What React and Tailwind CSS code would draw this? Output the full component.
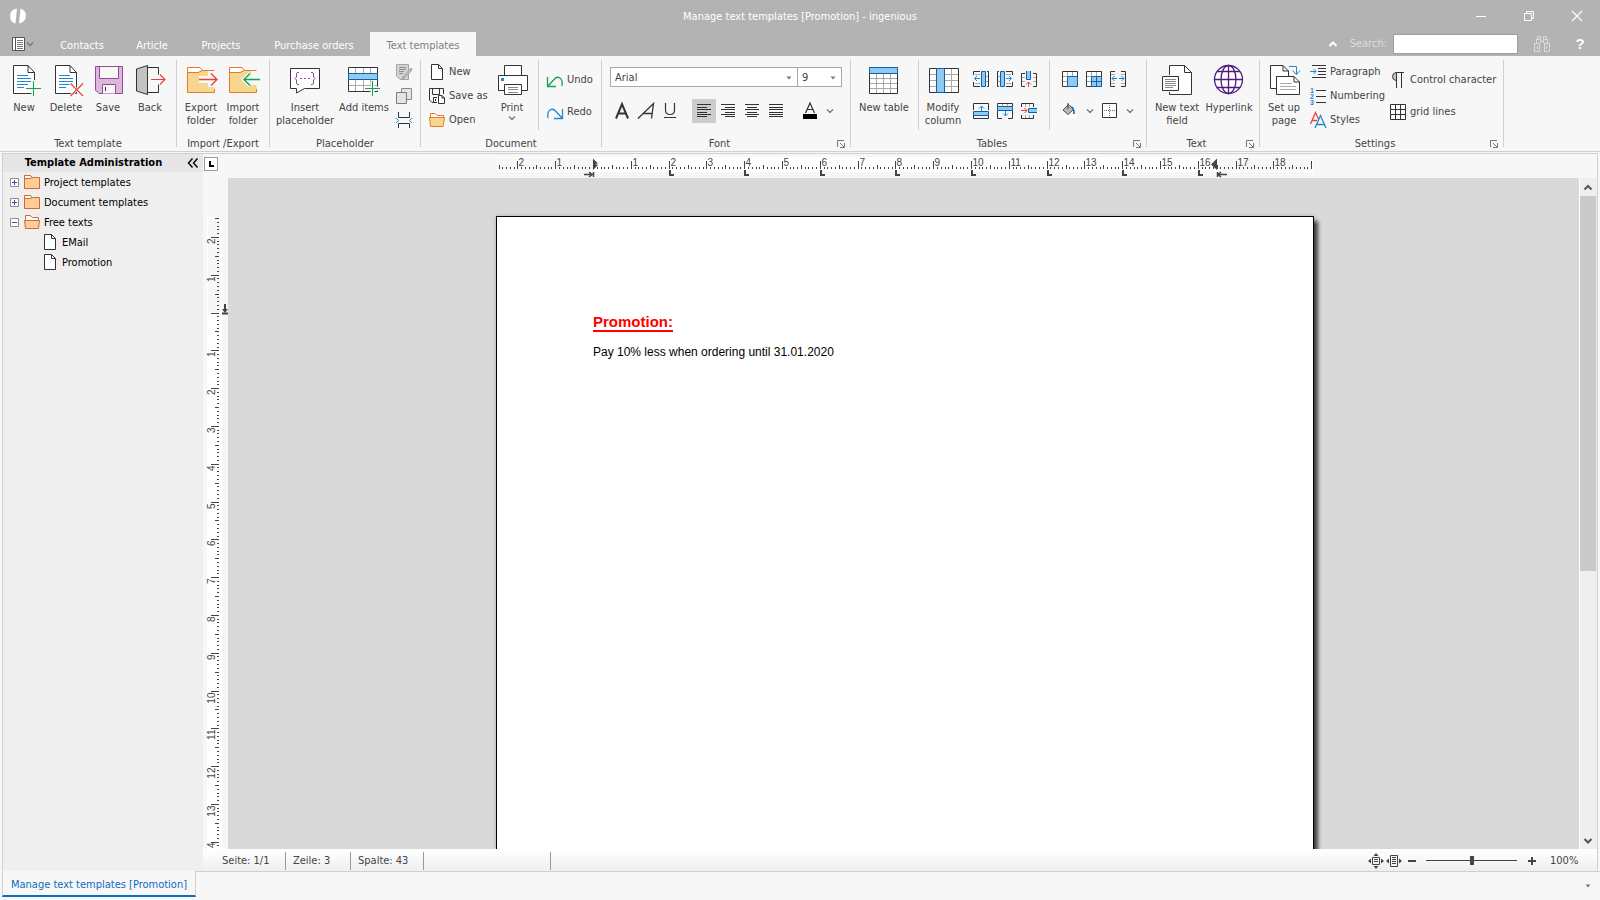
import React, { useState } from 'react';

const INK = '#333333';
const BLUE = '#1e88d2';
const GREEN = '#0fa651';
const RED = '#e8433f';
const ORANGE = '#e07b28';

function Icon({ size = 32, children }) {
  return (
    <svg
      className="block shrink-0 overflow-visible"
      width={size}
      height={size}
      viewBox={`0 0 ${size} ${size}`}
      fill="none"
      stroke={INK}
      aria-hidden="true"
    >
      {children}
    </svg>
  );
}

/* ---------- large icons ---------- */

const LinedPage = () => (
  <>
    <path d="M20 1.5H5.5V29.5H26.5V8.5L20 1.5V8.5H26.5" fill="#fff" />
    <path d="M9 11.5H20M9 14.5H23M9 17.5H23M9 20.5H20M9 23.5H16" stroke={BLUE} />
  </>
);

const icons = {
  newDoc: (
    <Icon>
      <LinedPage />
      <path d="M25.5 16V32M18 24.5H33" stroke="#f7f7f7" strokeWidth="4" />
      <path d="M25.5 17V32M18 24.5H33" stroke={GREEN} />
    </Icon>
  ),
  delete: (
    <Icon>
      <LinedPage />
      <path d="M20.5 19.5L33 32M33 19.5L20.5 32" stroke="#f7f7f7" strokeWidth="3" />
      <path d="M20.5 19.5L33 32M33 19.5L20.5 32" stroke={RED} strokeWidth="1.2" />
    </Icon>
  ),
  save: (
    <Icon>
      <path d="M3.5 2.5H30.5V29.5H7L3.5 26Z" fill="#dcb9dc" stroke="#95479b" />
      <path d="M7.5 2.5H26.5V14.5H7.5Z M10.5 29.5V20.5H23.5V29.5" fill="#f7f7f7" stroke="#95479b" />
      <path d="M13.5 23V27" stroke={INK} />
    </Icon>
  ),
  back: (
    <Icon>
      <path d="M13.5 3.5H24.5V10.5M24.5 20.5V28.5H13.5" fill="none" />
      <path d="M2.5 5L13.5 1.5V30.5L2.5 27Z" fill="#c3c3c3" />
      <path d="M17 15.5H31M26 10.5L31 15.5L26 20.5" stroke={RED} strokeWidth="1.2" />
    </Icon>
  ),
  exportFolder: (
    <Icon>
      <path d="M29.5 6.5H17.5L15 3.5H2.5V28.5H29.5V23H23V19H14V12H23V6.5" fill="#f7d690" stroke="none" />
      <path d="M3 4H15L17 6.5L12 9H3Z" fill="#fff" stroke="none" />
      <path d="M29.5 6.5H17.5L15 3.5H2.5V28.5H29.5V25M2.5 8.5H13L17.5 6.5" stroke={ORANGE} />
      <path d="M14 15.5H32M26 9.5L32 15.5L26 21.5" stroke="#f7f7f7" strokeWidth="4" />
      <path d="M14 15.5H32M26 9.5L32 15.5L26 21.5" stroke={RED} strokeWidth="1.4" />
    </Icon>
  ),
  importFolder: (
    <Icon>
      <path d="M29.5 6.5H17.5L15 3.5H2.5V28.5H29.5V21H24L16 15.5L24 9.5V6.5" fill="#f7d690" stroke="none" />
      <path d="M3 4H15L17 6.5L12 9H3Z" fill="#fff" stroke="none" />
      <path d="M29.5 6.5H17.5L15 3.5H2.5V28.5H29.5V25M2.5 8.5H13L17.5 6.5" stroke={ORANGE} />
      <path d="M17 15.5H33M23 9.5L17 15.5L23 21.5" stroke="#f7f7f7" strokeWidth="4" />
      <path d="M17 15.5H33M23 9.5L17 15.5L23 21.5" stroke={GREEN} strokeWidth="1.4" />
    </Icon>
  ),
  placeholder: (
    <Icon>
      <path d="M1.5 4.5H30.5V24.5H15.5L7.5 29V24.5H1.5Z" fill="#fff" />
      <path
        d="M10 8.5H9Q7.5 8.5 7.5 10V13L6 14.5L7.5 16V19Q7.5 20.5 9 20.5H10M22 8.5H23Q24.5 8.5 24.5 10V13L26 14.5L24.5 16V19Q24.5 20.5 23 20.5H22"
        stroke="#95479b"
      />
      <path d="M11 14.5H21" stroke="#95479b" strokeDasharray="2 2" />
    </Icon>
  ),
  addItems: (
    <Icon>
      <path d="M0.5 3.5H29.5V27.5H0.5Z" fill="#fff" />
      <path d="M7.5 4V27M15.5 4V27M22.5 4V27M1 21.5H29" stroke="#a8a8a8" />
      <path d="M0.5 9.5H29.5V15.5H0.5Z" fill="#92c9ee" stroke="#0e62ab" />
      <path d="M24.5 17V32M18 24.5H32" stroke="#f7f7f7" strokeWidth="4" />
      <path d="M24.5 17V32M17 24.5H32" stroke={GREEN} />
    </Icon>
  ),
  print: (
    <Icon>
      <path d="M8.5 1.5H25.5V12H8.5Z" fill="#fff" />
      <path d="M2.5 11.5H31.5V26.5H2.5Z" fill="#fff" />
      <path d="M8.5 20.5H25.5V30.5H8.5Z" fill="#fff" />
      <path d="M12 23.5H22M12 25.5H22M12 28.5H22" stroke="#888" />
      <path d="M5 14H8V17H5Z" fill={BLUE} stroke="none" />
    </Icon>
  ),
  newTable: (
    <Icon>
      <path d="M1.5 3.5H29.5V29.5H1.5Z" fill="#fff" />
      <path d="M8.5 9V29M15.5 9V29M22.5 9V29M2 14.5H29M2 19.5H29M2 24.5H29" stroke="#a8a8a8" />
      <path d="M1.5 3.5H29.5V9.5H1.5Z" fill="#92c9ee" stroke="#0e62ab" />
    </Icon>
  ),
  modifyColumn: (
    <Icon>
      <path d="M2.5 4.5H31.5V28.5H2.5Z" fill="#fff" />
      <path d="M24.5 5V28M3 10.5H31M3 16.5H31M3 22.5H31" stroke="#a8a8a8" />
      <path d="M9.5 4.5H17.5V28.5H9.5Z" fill="#92c9ee" stroke="#0e62ab" />
    </Icon>
  ),
  textField: (
    <Icon>
      <path d="M23.5 1.5H8.5V30.5H30.5V8.5L23.5 1.5V8.5H30.5" fill="#fff" />
      <path d="M0 11H19V28H0Z" fill="#f7f7f7" stroke="none" />
      <path d="M1.5 12.5H17.5V26.5H1.5Z" fill="#fff" />
      <path d="M4 15.5H15M4 17.5H15M4 19.5H15M4 21.5H15M4 23.5H12" stroke="#888" />
    </Icon>
  ),
  hyperlink: (
    <Icon>
      <g stroke="#4f1a80" strokeWidth="1.3">
        <circle cx="15.5" cy="15.5" r="14" fill="#fff" />
        <ellipse cx="15.5" cy="15.5" rx="7.5" ry="14" />
        <path d="M15.5 1.5V29.5M1.5 15.5H29.5M4 7.5H27M4 23.5H27" />
      </g>
    </Icon>
  ),
  setupPage: (
    <Icon>
      <path d="M15 1.5H2.5V24.5H8.5V12.5H20.5V7L15 1.5V7H20.5" fill="#fff" />
      <path d="M26 12.5H8.5V30.5H31.5V18L26 12.5V18H31.5" fill="#fff" />
      <path d="M12 19.5H24M12 22.5H28M12 25.5H28" stroke="#aaa" />
      <path d="M21 2.5H28.5V10M24.5 6.5L28.5 10.5L32 6.5" stroke={BLUE} />
    </Icon>
  ),

  /* ---------- small icons ---------- */
  edit: (
    <Icon size={16}>
      <path d="M0.5 0.5H12.5V15.5H4L0.5 12Z" fill="#d4d4d4" stroke="#a5a5a5" />
      <path d="M3 3.5H10M3 5.5H10M3 7.5H8M3 9.5H7" stroke="#8f8f8f" />
      <path d="M15 4L8 12L6 15L9 13.5L16 6Z" fill="#ccc" stroke="#999" />
    </Icon>
  ),
  copy: (
    <Icon size={16}>
      <path d="M5.5 0.5H15.5V11.5H5.5Z" fill="#e4e4e4" stroke="#8c8c8c" />
      <path d="M0.5 4.5H10.5V15.5H0.5Z" fill="#e4e4e4" stroke="#7c7c7c" />
    </Icon>
  ),
  pageBreak: (
    <Icon size={16}>
      <path d="M2.5 0V5.5H13.5V0M2.5 16V11.5H13.5V16" />
      <path d="M0 6L2.5 8.5L0 11M16 6L13.5 8.5L16 11" stroke={BLUE} />
    </Icon>
  ),
  page: (
    <Icon size={16}>
      <path d="M9.5 0.5H2.5V15.5H13.5V4.5L9.5 0.5V4.5H13.5" fill="#fff" />
    </Icon>
  ),
  saveAs: (
    <Icon size={16}>
      <path d="M8 14.5H3L0.5 12V0.5H14.5V6M3.5 0.5V6.5H10.5V0.5M4.5 14V9.5H8" fill="none" />
      <path d="M6.5 11V13" />
      <path d="M13 7.5H9.5V15.5H15.5V10L13 7.5V10H15.5" fill="#fff" />
    </Icon>
  ),
  open: (
    <Icon size={16}>
      <path d="M1.5 5.5V1.5H6L8 3.5H14.5V5.5" fill="#fff" stroke={ORANGE} />
      <path d="M0.5 5.5H15.5L14 14.5H1.5Z" fill="#f7d690" stroke={ORANGE} />
    </Icon>
  ),
  undo: (
    <Icon size={16}>
      <path d="M0.5 5V14.5H9M0.5 14.5L7 7.5Q10 4 13 6T15 14" stroke={GREEN} strokeWidth="1.3" />
    </Icon>
  ),
  redo: (
    <Icon size={16}>
      <path d="M15.5 5V14.5H7M15.5 14.5L9 7.5Q6 4 3 6T1 14" stroke={BLUE} strokeWidth="1.3" />
    </Icon>
  ),
  colLeft: (
    <Icon size={16}>
      <path d="M7 0.5H0.5V4M0.5 11V15.5H7M14 0.5H15.5V15.5H14" />
      <path d="M13 5.5H15M13 10.5H15M2 3.5H7M2 12.5H7" stroke="#a8a8a8" />
      <path d="M8.5 0.5H12.5V15.5H8.5Z" fill="#92c9ee" stroke="#0e62ab" />
      <path d="M7 7.5H2M4 5L1.5 7.5L4 10" stroke={BLUE} />
    </Icon>
  ),
  colRight: (
    <Icon size={16}>
      <path d="M9 0.5H15.5V4M15.5 11V15.5H9M2 0.5H0.5V15.5H2" />
      <path d="M1 5.5H3M1 10.5H3M9 3.5H14M9 12.5H14" stroke="#a8a8a8" />
      <path d="M3.5 0.5H7.5V15.5H3.5Z" fill="#92c9ee" stroke="#0e62ab" />
      <path d="M9 7.5H14M12 5L14.5 7.5L12 10" stroke={BLUE} />
    </Icon>
  ),
  colDelete: (
    <Icon size={16}>
      <path d="M4 2.5H0.5V15.5H4M12 2.5H15.5V15.5H12" />
      <path d="M1 6.5H4M1 10.5H4M12 6.5H15M12 10.5H15" stroke="#a8a8a8" />
      <path d="M5.5 0V8.5H9.5V0" fill="#92c9ee" stroke="#0e62ab" />
      <path d="M7.5 16V11M5 13.5L7.5 11L10 13.5" stroke={RED} />
    </Icon>
  ),
  rowAbove: (
    <Icon size={16}>
      <path d="M0.5 7V0.5H15.5V7M0.5 12V15.5H15.5V12" />
      <path d="M0.5 8.5H15.5V12.5H0.5Z" fill="#92c9ee" stroke="#0e62ab" />
      <path d="M8.5 8V3M6 5.5L8.5 3L11 5.5" stroke={BLUE} />
    </Icon>
  ),
  rowBelow: (
    <Icon size={16}>
      <path d="M0.5 4V0.5H15.5V4M0.5 8V15.5H5M15.5 8V15.5H11" />
      <path d="M5.5 1V3M10.5 1V3" stroke="#a8a8a8" />
      <path d="M0.5 3.5H15.5V7.5H0.5Z" fill="#92c9ee" stroke="#0e62ab" />
      <path d="M8.5 8V13M6 10.5L8.5 13L11 10.5" stroke={BLUE} />
    </Icon>
  ),
  rowDelete: (
    <Icon size={16}>
      <path d="M0.5 4V0.5H12.5V4M0.5 12V15.5H12.5V12" />
      <path d="M4.5 1V4M8.5 1V4M4.5 12V15M8.5 12V15" stroke="#a8a8a8" />
      <path d="M16 5.5H7.5V9.5H16" fill="#92c9ee" stroke="#0e62ab" />
      <path d="M0 7.5H6M3.5 5L6 7.5L3.5 10" stroke={RED} />
    </Icon>
  ),
  mergeCells: (
    <Icon size={16}>
      <path d="M0.5 0.5H15.5V15.5H0.5Z" fill="#fff" />
      <path d="M5.5 1V15M10.5 1V5M1 5.5H5M1 10.5H5" stroke="#a8a8a8" />
      <path d="M5.5 5.5H15.5V15.5H5.5Z" fill="#92c9ee" stroke="#0e62ab" />
    </Icon>
  ),
  splitCells: (
    <Icon size={16}>
      <path d="M0.5 0.5H15.5V15.5H0.5Z" fill="#fff" />
      <path d="M5.5 1V15M10.5 1V5M1 5.5H5M1 10.5H5" stroke="#a8a8a8" />
      <path d="M5.5 5.5H15.5V15.5H5.5ZM10.5 5.5V15.5M5.5 10.5H15.5" fill="#92c9ee" stroke="#0e62ab" />
    </Icon>
  ),
  cellWidth: (
    <Icon size={16}>
      <path d="M5 0.5H0.5V15.5H5M11 0.5H15.5V15.5H11" />
      <path d="M1 3.5H5M1 12.5H5M11 3.5H15M11 12.5H15" stroke="#a8a8a8" />
      <path d="M2 7.5H7M9 7.5H14M4.5 5L2 7.5L4.5 10M11.5 5L14 7.5L11.5 10" stroke={BLUE} />
    </Icon>
  ),
  fill: (
    <Icon size={16}>
      <path d="M1 12H15V15H1Z" fill="#fff" stroke="none" />
      <path d="M1 7L6.5 1.5L11.5 6.5L6 11.5Z" fill="#b8b8b8" stroke="#555" />
      <path d="M6 0V6" />
      <path d="M9 4Q12 4 12 11" stroke="#1e6fae" strokeWidth="1.6" />
    </Icon>
  ),
  borders: (
    <Icon size={16}>
      <path d="M0.5 0.5H14.5V14.5H0.5Z" fill="#fff" />
      <path d="M7.5 2V14M2 7.5H14" stroke="#666" strokeDasharray="1 1" />
    </Icon>
  ),
  paragraph: (
    <Icon size={16}>
      <path d="M2 1.5H16M8 4.5H16M8 7.5H16M8 10.5H16M2 13.5H16" />
      <path d="M0 7.5H6M3.5 5L6 7.5L3.5 10" stroke={BLUE} />
    </Icon>
  ),
  numbering: (
    <Icon size={16}>
      <path d="M6 2.5H16M6 8.5H16M6 14.5H16" />
      <g fill={BLUE} stroke="none" fontFamily="Liberation Sans, sans-serif" fontWeight="bold" fontSize="7">
        <text x="0" y="5">1</text>
        <text x="0" y="11">2</text>
        <text x="0" y="17">3</text>
      </g>
    </Icon>
  ),
  styles: (
    <Icon size={16}>
      <path d="M0.5 12L5.5 0.5L8.5 7M2 8.5H7" stroke={RED} strokeWidth="1.3" />
      <path d="M5 16L10.5 3.5L16 16M7 12.5H14" stroke={BLUE} strokeWidth="1.3" />
    </Icon>
  ),
  pilcrow: (
    <Icon size={16}>
      <path d="M7 1H6Q2.5 1 2.5 4.5T7 8.5Z" fill="#c4c4c4" stroke="none" />
      <path d="M14 0.5H6Q2.5 1 2.5 4.5T6 8.5M6.5 0.5V16M11.5 0.5V16" />
    </Icon>
  ),
  grid: (
    <Icon size={16}>
      <path d="M0.5 0.5H15.5V15.5H0.5ZM5.5 0.5V15.5M10.5 0.5V15.5M0.5 5.5H15.5M0.5 10.5H15.5" fill="#fff" />
    </Icon>
  ),
  alignLeft: (
    <Icon size={16}>
      <path d="M1 1.5H15M1 4.5H11M1 6.5H15M1 9.5H11M1 11.5H15M1 13.5H11" />
    </Icon>
  ),
  alignRight: (
    <Icon size={16}>
      <path d="M1 1.5H15M5 4.5H15M1 6.5H15M5 9.5H15M1 11.5H15M5 13.5H15" />
    </Icon>
  ),
  alignCenter: (
    <Icon size={16}>
      <path d="M1 1.5H15M3 4.5H13M1 6.5H15M3 9.5H13M1 11.5H15M3 13.5H13" />
    </Icon>
  ),
  justify: (
    <Icon size={16}>
      <path d="M1 1.5H15M1 4.5H15M1 6.5H15M1 9.5H15M1 11.5H15M1 13.5H15" />
    </Icon>
  ),
};

const Chevron = () => (
  <Icon size={8}>
    <path d="M1 2.5L4 5.5L7 2.5" stroke="#777" strokeWidth="1.3" />
  </Icon>
);

const Triangle = () => (
  <Icon size={8}>
    <path d="M1.5 2.5H6.5L4 5.5Z" fill="#777" stroke="none" />
  </Icon>
);

/* ---------- ribbon pieces ---------- */

function Group({ label, width, launcher, children }) {
  return (
    <section className={`flex shrink-0 ${width}`} aria-label={label}>
      <div className="flex min-w-0 flex-1 flex-col">
        <div className="flex h-[75px] shrink-0">{children}</div>
        <div className="flex h-[18px] shrink-0 items-center">
          <span className="flex-1 text-center">{label}</span>
          {launcher && (
            <button type="button" aria-label={`${label} options`} className="mr-[5px]">
              <Icon size={8}>
                <path d="M0.5 7V0.5H7M3 3L7 7M7.5 3V7.5H3" stroke="#777" />
              </Icon>
            </button>
          )}
        </div>
      </div>
      <div className="h-[87px] w-px bg-[#d0d0d0]" />
    </section>
  );
}

function BigButton({ icon, lines, width = 'w-[42px]', arrow }) {
  return (
    <button type="button" className={`flex shrink-0 flex-col items-center pt-1 ${width}`}>
      {icons[icon]}
      <span className="mt-[5px] flex flex-col items-center whitespace-nowrap leading-[13px]">
        {lines.map((line) => <span key={line}>{line}</span>)}
      </span>
      {arrow && <Chevron />}
    </button>
  );
}

function SmallButton({ icon, label, height = 'h-6' }) {
  return (
    <button type="button" className={`flex items-center gap-1 whitespace-nowrap ${height}`}>
      {icons[icon]}
      {label}
    </button>
  );
}

function IconButton({ icon, label, active }) {
  return (
    <button
      type="button"
      aria-label={label}
      className={`flex size-6 items-center justify-center ${active ? 'bg-[#cdcdcd]' : ''}`}
    >
      {icons[icon]}
    </button>
  );
}

function Combo({ label, value, options, width }) {
  const [current, setCurrent] = useState(value);
  return (
    <div className={`relative h-5 border border-[#a8a8a8] bg-white ${width}`}>
      <select
        aria-label={label}
        value={current}
        onChange={(e) => setCurrent(e.target.value)}
        className="block size-full appearance-none bg-transparent pl-1 pt-px outline-none"
      >
        {options.map((o) => <option key={o}>{o}</option>)}
      </select>
      <span className="pointer-events-none absolute right-1 top-1.5"><Triangle /></span>
    </div>
  );
}

const Divider = () => <div className="h-[70px] w-px shrink-0 bg-[#d0d0d0]" />;

function Ribbon() {
  return (
    <div className="flex h-24 shrink-0 overflow-hidden border-b border-[#d0d0d0] bg-[#f7f7f7] pt-1">
      <Group label="Text template" width="w-[177px]">
        <div className="flex pl-[3px]">
          <BigButton icon="newDoc" lines={['New']} />
          <BigButton icon="delete" lines={['Delete']} />
          <BigButton icon="save" lines={['Save']} />
          <BigButton icon="back" lines={['Back']} />
        </div>
      </Group>
      <Group label="Import /Export" width="w-[93px]">
        <div className="flex pl-[3px]">
          <BigButton icon="exportFolder" lines={['Export', 'folder']} />
          <BigButton icon="importFolder" lines={['Import', 'folder']} />
        </div>
      </Group>
      <Group label="Placeholder" width="w-[151px]">
        <div className="flex pl-1">
          <BigButton icon="placeholder" lines={['Insert', 'placeholder']} width="w-[62px]" />
          <BigButton icon="addItems" lines={['Add items']} width="w-[56px]" />
          <div className="flex flex-col">
            <IconButton icon="edit" label="Edit placeholder" />
            <IconButton icon="copy" label="Copy placeholder" />
            <IconButton icon="pageBreak" label="Page break" />
          </div>
        </div>
      </Group>
      <Group label="Document" width="w-[181px]">
        <div className="flex w-[70px] flex-col pl-2">
          <SmallButton icon="page" label="New" />
          <SmallButton icon="saveAs" label="Save as" />
          <SmallButton icon="open" label="Open" />
        </div>
        <BigButton icon="print" lines={['Print']} width="w-[42px]" arrow />
        <div className="w-[5px]" />
        <Divider />
        <div className="flex flex-col pl-2 pt-1">
          <SmallButton icon="undo" label="Undo" height="h-8" />
          <SmallButton icon="redo" label="Redo" height="h-8" />
        </div>
      </Group>
      <Group label="Font" width="w-[249px]" launcher>
        <div className="flex flex-col gap-3 pl-2 pt-[7px]">
          <div className="flex">
            <Combo label="Font name" value="Arial" options={['Arial', 'Tahoma', 'Verdana']} width="w-[188px]" />
            <Combo label="Font size" value="9" options={['8', '9', '10', '12']} width="w-11 border-l-0" />
          </div>
          <div className="flex items-center">
            <button type="button" aria-label="Bold" className="size-6">
              <Icon size={24}>
                <path d="M6 19.5L12 5L18 19.5M8 14.5H16" strokeWidth="2" />
              </Icon>
            </button>
            <button type="button" aria-label="Italic" className="size-6">
              <Icon size={24}>
                <path d="M4 19.5L19.5 4.5L17.5 19.5M9 14.5H18" strokeWidth="1.3" />
              </Icon>
            </button>
            <button type="button" aria-label="Underline" className="size-6">
              <Icon size={24}>
                <path d="M7.5 4V11Q7.5 15.5 12 15.5T16.5 11V4M6 18.5H18" strokeWidth="1.2" />
              </Icon>
            </button>
            <div className="ml-[10px] flex">
              <IconButton icon="alignLeft" label="Align left" active />
              <IconButton icon="alignRight" label="Align right" />
              <IconButton icon="alignCenter" label="Centre" />
              <IconButton icon="justify" label="Justify" />
            </div>
            <button type="button" aria-label="Font colour" className="ml-[10px] size-6">
              <Icon size={24}>
                <path d="M7.5 14L12 4L16.5 14M9 10.5H15" strokeWidth="1.2" />
                <path d="M5 15H19V20H5Z" fill="#000" stroke="none" />
              </Icon>
            </button>
            <button type="button" aria-label="More colours" className="ml-1"><Chevron /></button>
          </div>
        </div>
      </Group>
      <Group label="Tables" width="w-[296px]" launcher>
        <div className="w-[67px]">
          <BigButton icon="newTable" lines={['New table']} width="w-[66px]" />
        </div>
        <Divider />
        <div className="w-[50px]">
          <BigButton icon="modifyColumn" lines={['Modify', 'column']} width="w-12" />
        </div>
        <div className="grid grid-cols-3 content-start gap-y-2 pt-[7px]">
          <IconButton icon="colLeft" label="Column left" />
          <IconButton icon="colRight" label="Column right" />
          <IconButton icon="colDelete" label="Delete column" />
          <IconButton icon="rowAbove" label="Row above" />
          <IconButton icon="rowBelow" label="Row below" />
          <IconButton icon="rowDelete" label="Delete row" />
        </div>
        <div className="w-2" />
        <Divider />
        <div className="flex flex-col gap-2 pl-2 pt-[7px]">
          <div className="flex">
            <IconButton icon="mergeCells" label="Merge cells" />
            <IconButton icon="splitCells" label="Split cells" />
            <IconButton icon="cellWidth" label="Cell width" />
          </div>
          <div className="flex items-center">
            <IconButton icon="fill" label="Fill colour" />
            <button type="button" aria-label="More fills" className="px-1"><Chevron /></button>
            <IconButton icon="borders" label="Borders" />
            <button type="button" aria-label="More borders" className="px-1"><Chevron /></button>
          </div>
        </div>
      </Group>
      <Group label="Text" width="w-[113px]" launcher>
        <div className="flex pl-1">
          <BigButton icon="textField" lines={['New text', 'field']} width="w-[52px]" />
          <BigButton icon="hyperlink" lines={['Hyperlink']} width="w-[52px]" />
        </div>
      </Group>
      <Group label="Settings" width="w-[244px]" launcher>
        <div className="flex pl-[3px]">
          <BigButton icon="setupPage" lines={['Set up', 'page']} />
          <div className="flex w-20 flex-col pl-[5px]">
            <SmallButton icon="paragraph" label="Paragraph" />
            <SmallButton icon="numbering" label="Numbering" />
            <SmallButton icon="styles" label="Styles" />
          </div>
          <div className="flex flex-col pl-[5px] pt-1">
            <SmallButton icon="pilcrow" label="Control character" height="h-8" />
            <SmallButton icon="grid" label="grid lines" height="h-8" />
          </div>
        </div>
      </Group>
    </div>
  );
}

/* ---------- header ---------- */

const tabs = [
  { name: 'Contacts', width: 'w-[76px]' },
  { name: 'Article', width: 'w-[64px]' },
  { name: 'Projects', width: 'w-[74px]' },
  { name: 'Purchase orders', width: 'w-[112px]' },
  { name: 'Text templates', width: 'w-[106px]' },
];

function Header() {
  return (
    <header className="shrink-0 bg-[#b3b3b3] text-white">
      <div className="flex h-8 items-center justify-between px-[10px]">
        <div className="flex flex-1">
          <Icon size={16}>
            <path d="M7 0.5A7.7 7.7 0 0 0 5.5 15.5Z" fill="#fff" stroke="none" />
            <path d="M10.5 0.5A7.7 7.7 0 0 1 9 15.5Z" fill="#fff" stroke="none" />
          </Icon>
        </div>
        <h1 className="pt-px">Manage text templates [Promotion] - ingenious</h1>
        <div className="flex flex-1 items-center justify-end gap-9">
          <button type="button" aria-label="Minimize">
            <Icon size={12}><path d="M1 6.5H11" stroke="#fff" /></Icon>
          </button>
          <button type="button" aria-label="Restore">
            <Icon size={12}><path d="M1.5 3.5H8.5V10.5H1.5ZM3.5 3V1.5H10.5V8.5H9" stroke="#fff" /></Icon>
          </button>
          <button type="button" aria-label="Close" className="mr-[7px]">
            <Icon size={12}><path d="M1 1L11 11M11 1L1 11" stroke="#fff" strokeWidth="1.2" /></Icon>
          </button>
        </div>
      </div>
      <div className="flex h-6 items-center justify-between">
        <nav className="flex h-full items-center">
          <button type="button" aria-label="Menu" className="flex w-[44px] items-center pl-3">
            <Icon size={14}>
              <path d="M0.5 0.5H12.5V13.5H0.5Z" fill="#fff" stroke="#555" />
              <path d="M3.5 1V13" stroke="#555" />
              <path d="M5 3.5H11M5 5.5H11M5 7.5H11M5 9.5H11M5 11.5H11" stroke="#777" />
            </Icon>
            <Chevron />
          </button>
          {tabs.map((tab, i) => (
            <button
              key={tab.name}
              type="button"
              className={`h-full pt-[3px] ${tab.width} ${i === tabs.length - 1 ? 'bg-[#f7f7f7] text-[#808080]' : ''}`}
            >
              {tab.name}
            </button>
          ))}
        </nav>
        <div className="flex items-center pr-3">
          <button type="button" aria-label="Collapse ribbon" className="mr-[13px]">
            <Icon size={8}><path d="M0.5 6L4 2.5L7.5 6" stroke="#fff" strokeWidth="2" /></Icon>
          </button>
          <label htmlFor="search" className="mr-[6px] text-[#dedede]">Search:</label>
          <input id="search" type="text" className="mr-4 h-5 w-[125px] border border-[#9e9e9e] bg-white px-1 text-black outline-none" />
          <button type="button" aria-label="Find" className="mr-[22px]">
            <Icon size={16}>
              <path d="M0.5 7.5H5.5V15.5H0.5ZM10.5 7.5H15.5V15.5H10.5ZM2.5 7V3.5H6.5V7M9.5 7V3.5H13.5V7M3.5 3V0.5H6.5V3M9.5 3V0.5H12.5V3M6.5 5.5H9.5M3.5 10V13M12.5 10V13" stroke="#dcdcdc" />
            </Icon>
          </button>
          <button type="button" aria-label="Help" className="w-4 font-['Liberation_Sans',sans-serif] text-[15px] font-bold">?</button>
        </div>
      </div>
    </header>
  );
}

/* ---------- template tree ---------- */

const tree = [
  { name: 'Project templates', sign: '+' },
  { name: 'Document templates', sign: '+' },
  { name: 'Free texts', sign: '-', children: ['EMail', 'Promotion'] },
];

function Folder({ open }) {
  if (open) {
    return (
      <Icon size={16}>
        <path d="M1.5 7V1.5H6L8.5 3.5H14.5V7Z" fill="#fff" stroke="#cf6a2a" />
        <path d="M0.5 6.5H15.5L14.5 14.5H1.5Z" fill="#ffcb98" stroke="#cf6a2a" />
      </Icon>
    );
  }
  return (
    <Icon size={16}>
      <path d="M0.5 1.5H6L8.5 3.5H15.5V14.5H0.5Z" fill="#ffcb98" stroke="#cf6a2a" />
      <path d="M0.5 1.5H6L8.5 3.5L6 4.5H0.5Z" fill="#fff" stroke="#cf6a2a" />
    </Icon>
  );
}

function Sidebar() {
  return (
    <aside className="w-[200px] shrink-0 bg-[#efefef] text-black">
      <div className="flex h-[18px] items-center bg-[#e5e5e5] pr-[5px]">
        <h2 className="flex-1 whitespace-nowrap pr-1 text-center font-bold">Template Administration</h2>
        <button type="button" aria-label="Collapse panel">
          <Icon size={10}>
            <path d="M4.5 0.5L0.5 5L4.5 9.5M9.5 0.5L5.5 5L9.5 9.5" stroke="#000" strokeWidth="1.4" />
          </Icon>
        </button>
      </div>
      <ul>
        {tree.map((node) => (
          <li key={node.name}>
            <button type="button" className="flex h-5 items-center pl-[7px]">
              <Icon size={9}>
                <path d="M0.5 0.5H8.5V8.5H0.5Z" fill="#fff" stroke="#8e8e8e" />
                <path d={node.sign === '+' ? 'M2 4.5H7M4.5 2V7' : 'M2 4.5H7'} stroke="#3050a0" />
              </Icon>
              <span className="ml-[5px] mr-1"><Folder open={node.sign === '-'} /></span>
              <span className="pt-px">{node.name}</span>
            </button>
            {node.children && (
              <ul>
                {node.children.map((child) => (
                  <li key={child}>
                    <button type="button" className="flex h-5 items-center gap-1 pl-[39px]">
                      {icons.page}
                      <span className="pt-px">{child}</span>
                    </button>
                  </li>
                ))}
              </ul>
            )}
          </li>
        ))}
      </ul>
    </aside>
  );
}

/* ---------- rulers: 37.8px per centimetre, zero sits 2.5cm in ---------- */

const CM = 37.8;
const tickLength = (mm) => (mm % 10 === 0 ? 8 : mm % 5 === 0 ? 4 : 2);
const ticks = (from, to) => Array.from({ length: to - from + 1 }, (_, i) => from + i);

function HorizontalRuler() {
  const zero = 97.5;
  const at = (mm) => Math.round(zero + (mm * CM) / 10 - 0.5) + 0.5;
  return (
    <svg className="block shrink-0" width="818" height="24" viewBox="0 0 818 24" aria-hidden="true">
      <path d="M1 3H817V18H1Z" fill="#fff" />
      <path d="M2 4H97V17H2ZM721 4H816V17H721Z" fill="#f7f7f7" />
      {ticks(-25, 190).map((mm) => (
        <path key={mm} d={`M${at(mm)} ${15 - (mm === 0 ? 0 : tickLength(mm))}V15`} stroke="#444" />
      ))}
      <g fill="#444" fontSize="10" fontFamily="Liberation Sans, sans-serif">
        {ticks(-2, 18).filter((n) => n !== 0).map((n) => (
          <text key={n} x={at(n * 10) + 1} y="12">{Math.abs(n)}</text>
        ))}
      </g>
      {[2, 4, 6, 8, 10, 12, 14, 16].map((n) => (
        <path key={n} d={`M${at(n * 10) + 0.5} 16V21H${at(n * 10) + 4.5}`} fill="none" stroke="#444" strokeWidth="2" />
      ))}
      <path d="M97 4.5L102 9.5L99 10L102 11L97 16Z" fill="#444" />
      <path d="M97.5 18V23M88 20.5H97M93 18L96 20.5L93 23" fill="none" stroke="#444" strokeWidth="1.5" />
      <path d="M721 4.5V16L715 10.5Z" fill="#444" />
      <path d="M721.5 18V23M722 20.5H731M725 18L722 20.5L725 23" fill="none" stroke="#444" strokeWidth="1.5" />
    </svg>
  );
}

function VerticalRuler() {
  const zero = 134.5;
  const at = (mm) => Math.round(zero + (mm * CM) / 10) + 0.5;
  return (
    <svg className="block w-full" height="740" aria-hidden="true">
      <path d="M4 39H19V740H4Z" fill="#fff" />
      <path d="M5 40H18V134H5Z" fill="#f7f7f7" />
      {ticks(-25, 145).map((mm) => (
        <path key={mm} d={`M${16 - tickLength(mm)} ${at(mm)}H16`} stroke="#444" />
      ))}
      <g fill="#444" fontSize="10" fontFamily="Liberation Sans, sans-serif" textAnchor="end">
        {ticks(-2, 13).filter((n) => n !== 0).map((n) => (
          <text key={n} transform={`translate(12 ${at(n * 10) + 1}) rotate(-90)`}>{Math.abs(n)}</text>
        ))}
        <text transform={`translate(12 ${at(140)}) rotate(-90)`}>4</text>
      </g>
      <path d="M22 126V133M19 135.5H25" stroke="#444" strokeWidth="2" />
      <path d="M19 131H25L22 135Z" fill="#444" />
    </svg>
  );
}

/* ---------- editor ---------- */

function Editor() {
  return (
    <main className="flex min-w-0 flex-1 flex-col">
      <div className="flex h-6 shrink-0">
        <div className="w-[25px] shrink-0 pl-px pt-[3px]">
          <button type="button" aria-label="Tab stop" className="block border border-[#9c9c9c] bg-white">
            <Icon size={12}><path d="M5 3V8H9" stroke="#000" strokeWidth="2" /></Icon>
          </button>
        </div>
        <div className="flex flex-1 justify-center overflow-hidden pl-[3px] pr-[18px]">
          <HorizontalRuler />
        </div>
      </div>
      <div className="flex min-h-0 flex-1">
        <div className="w-[25px] shrink-0 overflow-hidden">
          <VerticalRuler />
        </div>
        <div className="flex min-w-0 flex-1 justify-center overflow-hidden bg-[#d9d9d9] pl-[3px] pt-[38px]">
          <article className="h-full w-[818px] shrink-0 border border-b-0 border-black bg-white pl-[96px] pt-24 font-['Liberation_Sans',sans-serif] text-black shadow-[4px_5px_4px_#000000b0,0_0_4px_#00000030]">
            <h3 className="text-[15px] font-bold leading-[17px] text-[#f00]">
              <span className="border-b-2 border-[#f00]">Promotion:</span>
            </h3>
            <p className="mt-[14px] text-xs leading-4">Pay 10% less when ordering until 31.01.2020</p>
          </article>
        </div>
        <div className="flex w-[18px] shrink-0 flex-col items-center border-l border-white bg-[#efefef] pr-px">
          <button type="button" aria-label="Scroll up" className="flex h-[18px] items-center">
            <Icon size={8}><path d="M0.5 6.5L4 3L7.5 6.5" stroke="#555" strokeWidth="2" /></Icon>
          </button>
          <div className="flex w-full flex-1 flex-col">
            <div className="h-[59%] bg-[#cacaca]" />
          </div>
          <button type="button" aria-label="Scroll down" className="flex h-[18px] items-center">
            <Icon size={8}><path d="M0.5 3L4 6.5L7.5 3" stroke="#555" strokeWidth="2" /></Icon>
          </button>
        </div>
      </div>
      <StatusBar />
    </main>
  );
}

function StatusBar() {
  const [zoom, setZoom] = useState(100);
  return (
    <footer className="flex h-[22px] shrink-0 items-center justify-between bg-linear-to-b from-white to-[#efefef] pr-[18px] pt-px">
      <div className="flex h-[18px] items-center">
        <span className="flex h-full w-[83px] items-center border-r border-[#9a9a9a] pl-[19px] pt-px">Seite: 1/1</span>
        <span className="flex h-full w-[65px] items-center border-r border-[#9a9a9a] pl-[7px] pt-px">Zeile: 3</span>
        <span className="flex h-full w-[73px] items-center border-r border-[#9a9a9a] pl-[7px] pt-px">Spalte: 43</span>
        <span className="h-full w-[127px] border-r border-[#9a9a9a]" />
      </div>
      <div className="flex items-center">
        <button type="button" aria-label="Fit page" className="mr-[2px]">
          <Icon size={16}>
            <path d="M4.5 4.5H11.5V11.5H4.5ZM6 6.5H10M6 8.5H10" stroke="#444" />
            <path d="M5.5 3H10.5L8 0ZM5.5 13H10.5L8 16ZM3 5.5V10.5L0 8ZM13 5.5V10.5L16 8Z" fill="#444" stroke="none" />
          </Icon>
        </button>
        <button type="button" aria-label="Fit width" className="mr-[6px]">
          <Icon size={16}>
            <path d="M4.5 2.5H11.5V13.5H4.5ZM6 4.5H10M6 6.5H10M6 8.5H10M6 10.5H10" stroke="#444" />
            <path d="M3 5.5V10.5L0 8ZM13 5.5V10.5L16 8Z" fill="#444" stroke="none" />
          </Icon>
        </button>
        <button type="button" aria-label="Zoom out" className="mr-[10px]">
          <Icon size={8}><path d="M0 4H8" stroke="#444" strokeWidth="2" /></Icon>
        </button>
        <input
          type="range"
          aria-label="Zoom"
          min="0"
          max="200"
          value={zoom}
          onChange={(e) => setZoom(Number(e.target.value))}
          className="h-[10px] w-[91px] appearance-none bg-[linear-gradient(#444,#444)] bg-[length:100%_1px] bg-center bg-no-repeat [&::-webkit-slider-thumb]:h-[9px] [&::-webkit-slider-thumb]:w-1 [&::-webkit-slider-thumb]:appearance-none [&::-webkit-slider-thumb]:bg-[#444]"
        />
        <button type="button" aria-label="Zoom in" className="ml-[11px] mr-[14px]">
          <Icon size={8}><path d="M0 4H8M4 0V8" stroke="#444" strokeWidth="2" /></Icon>
        </button>
        <span className="w-[29px] whitespace-nowrap">{zoom}%</span>
      </div>
    </footer>
  );
}

export default function App() {
  return (
    <div className="flex h-screen flex-col overflow-hidden bg-[#f7f7f7] font-['Tahoma','DejaVu_Sans_Condensed','DejaVu_Sans',sans-serif] text-[11px] leading-4 text-[#444]">
      <Header />
      <Ribbon />
      <div className="mx-[2px] mt-px flex min-h-0 flex-1 border border-b-0 border-[#d0d0d0]">
        <Sidebar />
        <Editor />
      </div>
      <div className="flex h-[29px] shrink-0 items-start pl-[2px]">
        <button type="button" className="h-[26px] w-[194px] whitespace-nowrap border-x border-b-2 border-b-[#0f6cbd] border-l-[#d0d0d0] border-r-[#d0d0d0] pt-[3px] text-[#0f6cbd]">
          Manage text templates [Promotion]
        </button>
        <div className="flex h-full flex-1 items-center justify-end border-t border-[#d0d0d0] pr-2">
          <button type="button" aria-label="Window list"><Triangle /></button>
        </div>
      </div>
    </div>
  );
}
